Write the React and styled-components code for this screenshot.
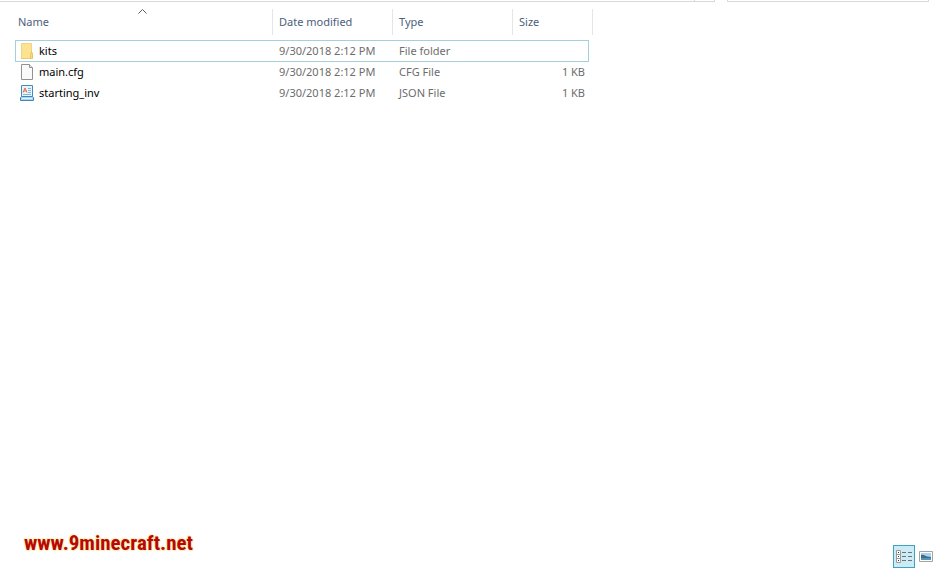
import React, { useState } from "react";
import styled, { createGlobalStyle } from "styled-components";

const GlobalStyle = createGlobalStyle`
  *, *::before, *::after { box-sizing: border-box; }
  body {
    margin: 0;
    background: #fff;
    font-family: "Noto Sans", "Open Sans", sans-serif;
    font-size: 11px;
    line-height: 16px;
  }
  button { font: inherit; }
`;

const Explorer = styled.div`
  display: flex;
  flex-direction: column;
  min-height: 100vh;
`;

const AddressRow = styled.header`
  display: flex;
  gap: 12px;
  height: 2px;
  padding-right: 11px;
`;

const AddressField = styled.div`
  display: flex;
  justify-content: flex-end;
  flex: 1;
  border: solid #d9d9d9;
  border-width: 0 1px 1px 0;
`;

const RefreshSlot = styled.div`
  width: 20px;
  border-left: 1px solid #d9d9d9;
`;

const SearchField = styled.div`
  width: 202px;
  border: solid #d9d9d9;
  border-width: 0 1px 1px;
`;

const FileArea = styled.main`
  flex: 1;
  padding: 7px 15px 0;
`;

const FileTable = styled.table`
  width: 578px;
  table-layout: fixed;
  border-collapse: separate;
  border-spacing: 0;
`;

const Column = styled.col`
  width: ${(p) => p.$width}px;
`;

const HeadCell = styled.th`
  padding: 0 0 5px;
  font-weight: 400;
`;

const SortButton = styled.button`
  display: block;
  position: relative;
  width: 100%;
  height: 26px;
  padding: 0 0 0 ${(p) => (p.$first ? 3 : 6)}px;
  border: 0;
  border-right: 1px solid #e2e6ea;
  background: none;
  color: #4c607a;
  text-align: left;
`;

const SortMark = styled.svg`
  position: absolute;
  top: 0;
  left: 50%;
  width: 9px;
  height: 5px;
  margin-left: -6px;
`;

const Cell = styled.td`
  height: 21px;
  padding: 0 4px 2px 6px;
  color: #6d6d6d;
  text-align: ${(p) => p.$align || "left"};
  white-space: nowrap;
`;

const NameCell = styled(Cell)`
  padding-left: 4px;
  color: #000;
`;

const FileRow = styled.tr`
  ${(p) =>
    p.$selected &&
    `
    ${Cell}:not(:last-child) {
      height: 22px;
      padding-bottom: 0;
      border: solid #a5cfe0;
      border-width: 1px 0;
    }
    ${Cell}:first-child { border-left-width: 1px; padding-left: 3px; }
    ${Cell}:nth-last-child(2) { border-right-width: 1px; }
  `}
`;

const FileName = styled.div`
  display: flex;
  align-items: center;
  gap: 4px;
`;

const StatusRow = styled.footer`
  display: flex;
  align-items: flex-end;
  justify-content: space-between;
  padding: 0 5px 0 24px;
`;

const SiteLink = styled.a`
  padding-bottom: 13px;
  color: #b70808;
  font: 700 21px/24px "Roboto Condensed", "Liberation Sans Narrow", sans-serif;
  text-decoration: none;
  text-shadow: 0 0 2px #ffe9a0, 1px 1px 1px #ffefb8, -1px -1px 1px #ffefb8;
`;

const ViewSwitch = styled.div`
  display: flex;
  gap: 2px;
`;

const ViewButton = styled.button`
  display: grid;
  place-items: center;
  width: ${(p) => (p.$active ? 22 : 18)}px;
  height: 23px;
  padding: 0;
  border: ${(p) => (p.$active ? "1px solid #3fa3bf" : "0")};
  background: ${(p) => (p.$active ? "#cdebf5" : "none")};
`;

const Icon = styled.svg`
  display: block;
  flex: none;
`;

function FolderIcon() {
  return (
    <Icon width="16" height="16" viewBox="0 0 16 16" aria-hidden="true">
      <path d="M2.500.5h10v15h-10z" fill="#fbe392" stroke="#f0d480" />
      <path d="M11.500 15.500v-3l1-4 1 2v5z" fill="#f8dc84" stroke="#e6c561" />
      <path d="M2 15.500h12" stroke="#e9cb6c" />
    </Icon>
  );
}

function PageIcon() {
  return (
    <Icon width="16" height="16" viewBox="0 0 16 16" aria-hidden="true">
      <path d="M2.500.5h8l3 3v12h-11z" fill="#fafafa" stroke="#929292" />
      <path d="M10.500.5v3h3" fill="#e8e8e8" stroke="#929292" />
    </Icon>
  );
}

function DocumentIcon() {
  return (
    <Icon width="16" height="16" viewBox="0 0 16 16" aria-hidden="true">
      <path d="M2.500.5h11v11h-11z" fill="#e6f4fc" stroke="#4a8ab8" />
      <path d="M2.500 11.500h11l1 1v3h-13v-3z" fill="#a9d5ef" stroke="#4286b4" />
      <path d="M3 13.500h10" stroke="#dff2fd" />
      <path d="M4 7.500 6 3l2 4.500M5 6h2" fill="none" stroke="#ea6a3c" />
      <path d="M9 3.500h3M9 5.500h3M9 7.500h3M4 9.500h8" stroke="#7db8e2" />
    </Icon>
  );
}

function DetailsIcon() {
  return (
    <Icon width="16" height="15" viewBox="0 0 16 15" aria-hidden="true">
      <path d="M.5 1.500h4v12h-4zM.5 5.500h4M.5 9.500h4" fill="#fff" stroke="#9a9a9a" />
      <path d="M2 3h1v1H2zM2 7h1v1H2zM2 11h1v1H2z" fill="#333" />
      <path d="M6 3.500h4M12 3.500h4M6 7.500h4M12 7.500h4M6 11.500h4M12 11.500h4" stroke="#64767f" />
    </Icon>
  );
}

function PictureIcon() {
  return (
    <Icon width="14" height="11" viewBox="0 0 14 11" aria-hidden="true">
      <path d="M.5.5h13v10H.5z" fill="#fff" stroke="#a3a3a3" />
      <path d="M2 2h10v7H2z" fill="#a8d3f2" />
      <path d="M2 4c3-1 4 1 6 1.500L12 6v2H2z" fill="#3d6f86" />
      <path d="M2 7h10v2H2z" fill="#5a93b8" />
    </Icon>
  );
}

const icons = { folder: FolderIcon, page: PageIcon, document: DocumentIcon };

const columns = ["Name", "Date modified", "Type", "Size"];

const files = [
  { icon: "folder", name: "kits", date: "9/30/2018 2:12 PM", type: "File folder", size: "" },
  { icon: "page", name: "main.cfg", date: "9/30/2018 2:12 PM", type: "CFG File", size: "1 KB" },
  { icon: "document", name: "starting_inv", date: "9/30/2018 2:12 PM", type: "JSON File", size: "1 KB" },
];

export default function App() {
  const [selected, setSelected] = useState("kits");

  return (
    <Explorer>
      <GlobalStyle />
      <AddressRow>
        <AddressField>
          <RefreshSlot />
        </AddressField>
        <SearchField />
      </AddressRow>
      <FileArea>
        <FileTable>
          <colgroup>
            <Column $width={258} />
            <Column $width={120} />
            <Column $width={120} />
            <Column $width={76} />
            <Column $width={4} />
          </colgroup>
          <thead>
            <tr>
              {columns.map((label, i) => (
                <HeadCell
                  key={label}
                  scope="col"
                  colSpan={label === "Size" ? 2 : 1}
                  aria-sort={i === 0 ? "ascending" : undefined}
                >
                  <SortButton type="button" $first={i === 0}>
                    {label}
                    {i === 0 && (
                      <SortMark viewBox="0 0 9 5" aria-hidden="true">
                        <path d="M.5 4.500l4-4 4 4" fill="none" stroke="#5c5c5c" />
                      </SortMark>
                    )}
                  </SortButton>
                </HeadCell>
              ))}
            </tr>
          </thead>
          <tbody>
            {files.map((file) => {
              const FileIcon = icons[file.icon];
              return (
                <FileRow
                  key={file.name}
                  $selected={file.name === selected}
                  onClick={() => setSelected(file.name)}
                >
                  <NameCell>
                    <FileName>
                      <FileIcon />
                      {file.name}
                    </FileName>
                  </NameCell>
                  <Cell>{file.date}</Cell>
                  <Cell>{file.type}</Cell>
                  <Cell $align="right">{file.size}</Cell>
                  <td />
                </FileRow>
              );
            })}
          </tbody>
        </FileTable>
      </FileArea>
      <StatusRow>
        <SiteLink href="#site">www.9minecraft.net</SiteLink>
        <ViewSwitch>
          <ViewButton type="button" aria-label="Details" aria-pressed="true" $active>
            <DetailsIcon />
          </ViewButton>
          <ViewButton type="button" aria-label="Large icons" aria-pressed="false">
            <PictureIcon />
          </ViewButton>
        </ViewSwitch>
      </StatusRow>
    </Explorer>
  );
}
